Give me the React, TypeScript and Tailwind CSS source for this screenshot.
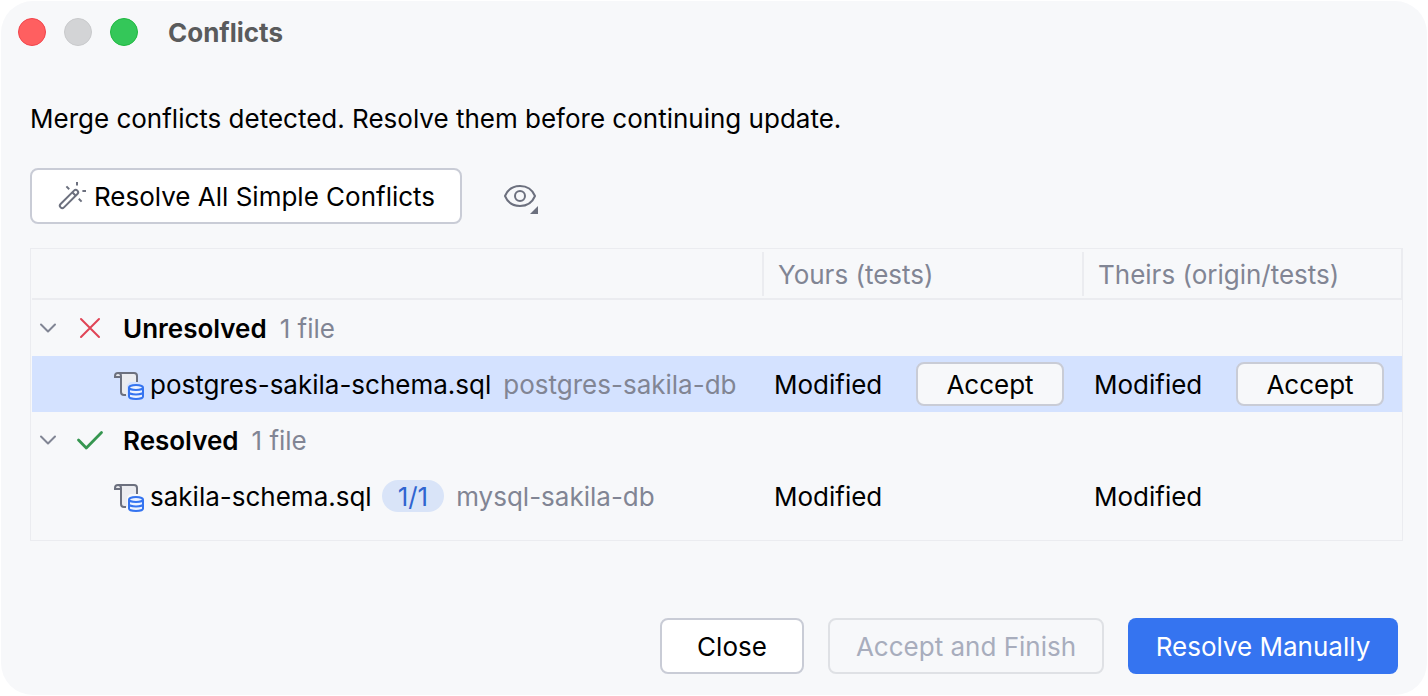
import type { ReactNode } from 'react';

function WandIcon() {
  return (
    <svg className="size-8 shrink-0" viewBox="0 0 32 32" fill="none" stroke="#6C707E" strokeWidth="2" aria-hidden="true">
      <rect x="1.1" y="16.6" width="23.8" height="4.8" rx="2.4" transform="rotate(-45 13 19)" />
      <path d="M16.3 12.3l3.4 3.4M21 2v3.6M10.4 6.4l2.8 2.8M26.4 11H30M22.8 18.8l2.8 2.8" />
    </svg>
  );
}

function EyeIcon() {
  return (
    <svg className="size-10" viewBox="0 0 40 40" fill="none" stroke="#6C707E" strokeWidth="2" aria-hidden="true">
      <path d="M5 20C7.5 14 13 10 20 10s12.500 4 15 10c-2.500 6-8 10-15 10S7.500 26 5 20Z" strokeLinejoin="round" />
      <circle cx="20" cy="20" r="5" />
      <path d="M30 38h8v-8Z" fill="#6C707E" stroke="none" />
    </svg>
  );
}

function ChevronIcon() {
  return (
    <svg className="size-6" viewBox="0 0 24 24" fill="none" stroke="#818594" strokeWidth="2" strokeLinecap="round" strokeLinejoin="round" aria-hidden="true">
      <path d="M5 8.500l7 7 7-7" />
    </svg>
  );
}

function CrossIcon() {
  return (
    <svg className="size-8 shrink-0" viewBox="0 0 32 32" fill="none" stroke="#E04455" strokeWidth="2" strokeLinecap="round" aria-hidden="true">
      <path d="M7 7l18 18M25 7L7 25" />
    </svg>
  );
}

function CheckIcon() {
  return (
    <svg className="size-8 shrink-0" viewBox="0 0 32 32" fill="none" stroke="#369650" strokeWidth="2.800" strokeLinecap="round" strokeLinejoin="round" aria-hidden="true">
      <path d="M4.500 16l7.800 8L27.500 8.500" />
    </svg>
  );
}

function SqlFileIcon() {
  return (
    <svg className="size-8 shrink-0" viewBox="0 0 32 32" fill="none" strokeWidth="2" aria-hidden="true">
      <path d="M7 5h15a3 3 0 0 1 3 3v6h-7l-3 3v10h-3a3 3 0 0 1-3-3V9H3V8a3 3 0 0 1 3-3Z" fill="#EBECF0" />
      <path d="M14 27h-2a3 3 0 0 1-3-3V8a3 3 0 0 0-3-3 3 3 0 0 0-3 3v1h6M6 5h16a3 3 0 0 1 3 3v6" stroke="#6C707E" />
      <path d="M17 19.500v9c0 1.400 3.100 2.500 7 2.500s7-1.100 7-2.500v-9" fill="#EDF3FF" stroke="#3574F0" />
      <ellipse cx="24" cy="19.500" rx="7" ry="2.500" fill="#EDF3FF" stroke="#3574F0" />
      <path d="M17 24c0 1.400 3.100 2.500 7 2.500s7-1.100 7-2.500" stroke="#3574F0" />
    </svg>
  );
}

function GroupRow({ icon, title, count }: { icon: ReactNode; title: string; count: string }) {
  return (
    <tr className="h-14">
      <td colSpan={3} className="p-0">
        <div className="flex items-center pl-1">
          <button type="button" aria-label={`Toggle ${title}`} className="flex">
            <ChevronIcon />
          </button>
          <span className="flex pr-[17px] pl-3.5">{icon}</span>
          <span className="pt-0.5 font-semibold">{title}</span>
          <span className="pt-0.5 pl-[13px] text-[#818594]">{count}</span>
        </div>
      </td>
    </tr>
  );
}

function SideCell({ status, acceptable }: { status: string; acceptable?: boolean }) {
  return (
    <td className="p-0">
      <div className="flex items-center justify-between pr-[18px] pl-3">
        <span className="pt-0.5">{status}</span>
        {acceptable && (
          <button type="button" className="h-11 w-[148px] rounded-lg border-2 border-[#C9CCD6] bg-[#F7F8FA] pt-0.5">
            Accept
          </button>
        )}
      </div>
    </td>
  );
}

function FileRow({ name, path, badge, selected }: { name: string; path: string; badge?: string; selected?: boolean }) {
  return (
    <tr className={selected ? 'h-14 bg-[#D4E2FF]' : 'h-14'}>
      <td className="p-0">
        <div className="flex items-center pl-20 whitespace-nowrap">
          <SqlFileIcon />
          <span className="pt-0.5 pl-1.5">{name}</span>
          {badge && (
            <span className="ml-2.5 flex h-8 items-center rounded-full bg-[#D9E4F8] px-4 pt-0.5 text-[#3065D0]">{badge}</span>
          )}
          <span className="pt-0.5 pl-3 text-[#818594]">{path}</span>
        </div>
      </td>
      <SideCell status="Modified" acceptable={selected} />
      <SideCell status="Modified" acceptable={selected} />
    </tr>
  );
}

export default function App() {
  return (
    <div className="bg-white p-px font-['Inter',sans-serif] text-[26px] leading-8 text-black">
      <main className="rounded-[32px] bg-[#F7F8FA] pb-[21px]">
        <header className="flex items-center pt-3.5 pl-[17px]">
          <div className="flex gap-[18px]">
            <button type="button" aria-label="Close window" className="size-7 rounded-full border border-[#F2444B] bg-[#FF5F60]" />
            <button type="button" aria-label="Minimize window" disabled className="size-7 rounded-full border border-[#C9CACC] bg-[#D3D4D6]" />
            <button type="button" aria-label="Zoom window" className="size-7 rounded-full border border-[#1FB940] bg-[#34C759]" />
          </div>
          <h1 className="pt-0.5 pl-[30px] font-bold text-[#5A5B5C]">Conflicts</h1>
        </header>

        <section className="pt-[54px] pr-6 pl-[29px]">
          <p>Merge conflicts detected. Resolve them before continuing update.</p>
          <div className="flex items-center gap-[38px] pt-[33px]">
            <button type="button" className="flex h-14 w-[432px] items-center gap-1.5 rounded-lg border-2 border-[#C9CCD6] bg-white pl-6 whitespace-nowrap">
              <WandIcon />
              <span className="pt-0.5">Resolve All Simple Conflicts</span>
            </button>
            <button type="button" aria-label="View options" className="flex">
              <EyeIcon />
            </button>
          </div>

          <div className="mt-6 border border-[#EBECF0] pb-4 pl-px">
            <table className="w-full table-fixed border-collapse text-left">
              <colgroup>
                <col />
                <col className="w-80" />
                <col className="w-80" />
              </colgroup>
              <thead className="text-[#818594] shadow-[inset_0_-2px_#EBECF0]">
                <tr>
                  <th className="p-0" aria-label="File" />
                  <th className="p-0 font-normal">
                    <div className="mt-[3px] mb-1 flex h-11 items-center border-l-2 border-[#EBECF0] pt-0.5 pl-3.5">Yours (tests)</div>
                  </th>
                  <th className="p-0 font-normal shadow-[inset_-1px_0_#EBECF0]">
                    <div className="mt-[3px] mb-1 flex h-11 items-center border-l-2 border-[#EBECF0] pt-0.5 pl-3.5">Theirs (origin/tests)</div>
                  </th>
                </tr>
              </thead>
              <tbody>
                <GroupRow icon={<CrossIcon />} title="Unresolved" count="1 file" />
                <FileRow name="postgres-sakila-schema.sql" path="postgres-sakila-db" selected />
                <GroupRow icon={<CheckIcon />} title="Resolved" count="1 file" />
                <FileRow name="sakila-schema.sql" path="mysql-sakila-db" badge="1/1" />
              </tbody>
            </table>
          </div>
        </section>

        <footer className="flex justify-end gap-6 pt-[77px] pr-[29px]">
          <button type="button" className="h-14 w-36 rounded-lg border-2 border-[#C9CCD6] bg-white pt-0.5">
            Close
          </button>
          <button type="button" disabled className="h-14 w-[276px] rounded-lg border-2 border-[#DFE1E5] pt-0.5 text-[#A8ADBD]">
            Accept and Finish
          </button>
          <button type="button" className="h-14 w-[270px] rounded-lg bg-[#3574F0] pt-0.5 text-white">
            Resolve Manually
          </button>
        </footer>
      </main>
    </div>
  );
}
